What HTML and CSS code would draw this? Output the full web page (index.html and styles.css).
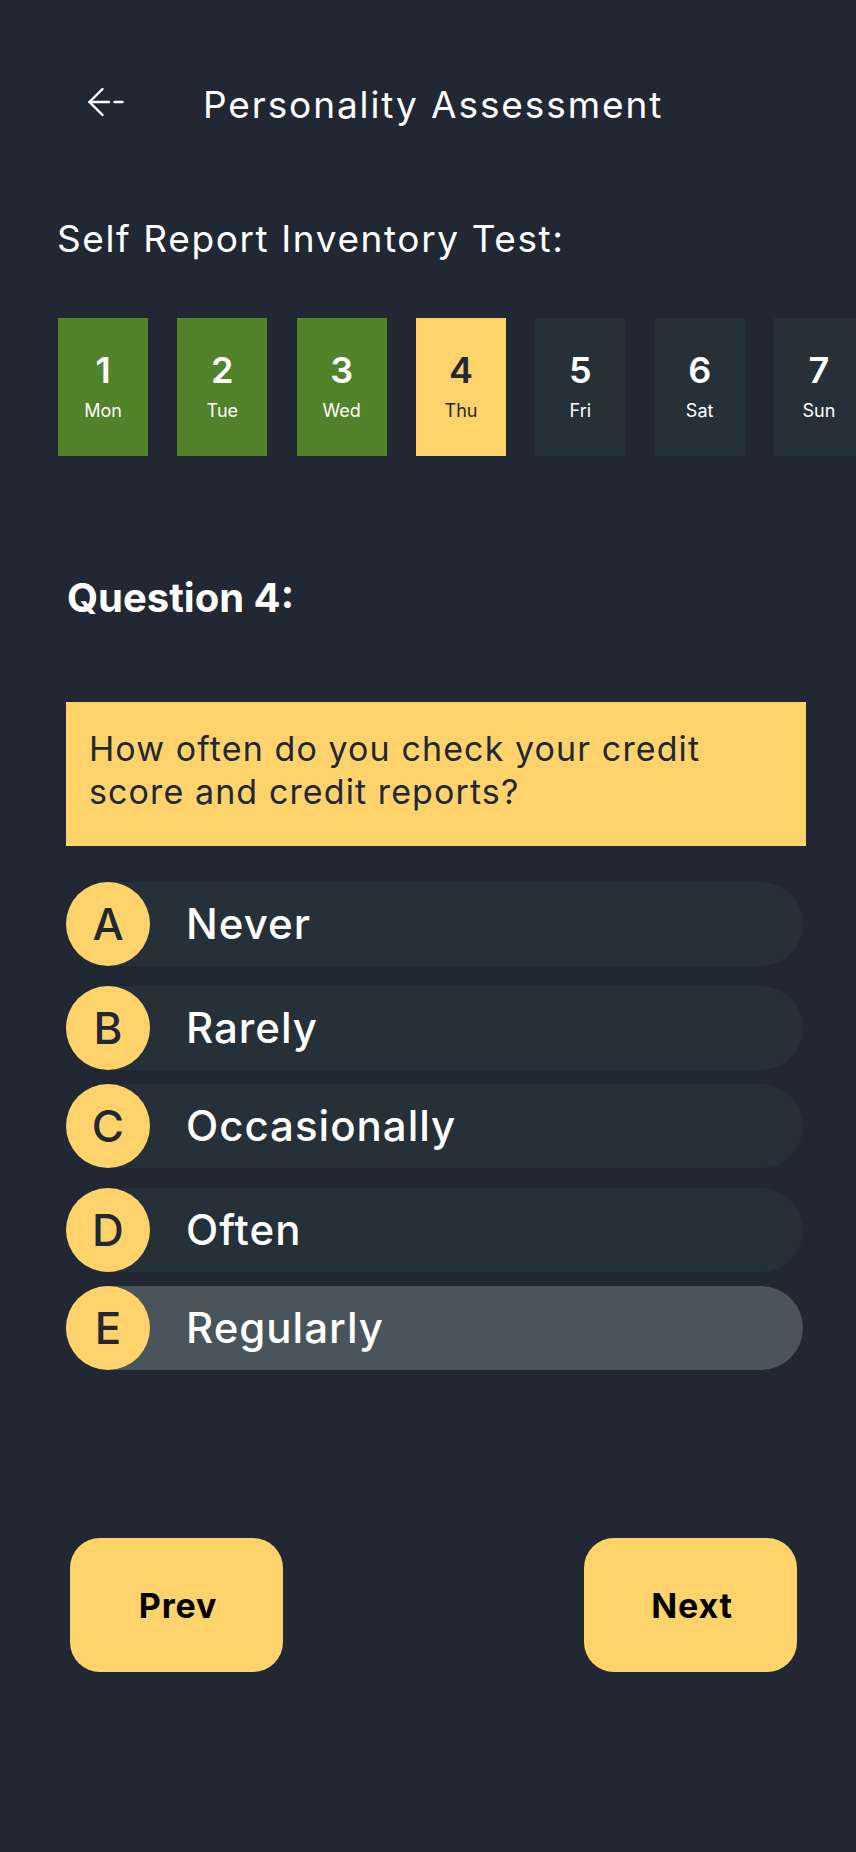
FILE: index.html
```html
<!DOCTYPE html>
<html lang="en">
<head>
<meta charset="utf-8">
<title>Personality Assessment</title>
<link rel="stylesheet" href="styles.css">
</head>
<body>
<div class="screen">
  <header class="header">
    <svg class="back" width="36" height="30" viewBox="0 0 36 30" fill="none" stroke="#ffffff" stroke-width="2.4" stroke-linecap="round" stroke-linejoin="round">
      <path d="M14.5 2 L1.5 15 L14.5 28"/>
      <path d="M1.5 15 H21"/>
      <path d="M26.5 15 H34.5"/>
    </svg>
    <h1 class="title">Personality Assessment</h1>
  </header>

  <h2 class="subtitle">Self Report Inventory Test:</h2>

  <div class="days">
    <div class="day done"><span class="num">1</span><span class="lbl">Mon</span></div>
    <div class="day done"><span class="num">2</span><span class="lbl">Tue</span></div>
    <div class="day done"><span class="num">3</span><span class="lbl">Wed</span></div>
    <div class="day current"><span class="num">4</span><span class="lbl">Thu</span></div>
    <div class="day"><span class="num">5</span><span class="lbl">Fri</span></div>
    <div class="day"><span class="num">6</span><span class="lbl">Sat</span></div>
    <div class="day"><span class="num">7</span><span class="lbl">Sun</span></div>
  </div>

  <h3 class="qlabel">Question 4:</h3>

  <div class="qbox">How often do you check your credit score and credit reports?</div>

  <div class="options">
    <div class="option wide"><span class="letter">A</span><span class="otext">Never</span></div>
    <div class="option"><span class="letter">B</span><span class="otext">Rarely</span></div>
    <div class="option wide"><span class="letter">C</span><span class="otext">Occasionally</span></div>
    <div class="option"><span class="letter">D</span><span class="otext">Often</span></div>
    <div class="option selected"><span class="letter">E</span><span class="otext">Regularly</span></div>
  </div>

  <div class="nav">
    <button class="btn">Prev</button>
    <button class="btn">Next</button>
  </div>
</div>
</body>
</html>
```

FILE: styles.css
```css
* { box-sizing: border-box; }

html, body {
  margin: 0;
  padding: 0;
  background: #222833;
}

body {
  font-family: Inter, "Noto Sans", "Liberation Sans", sans-serif;
  color: #ffffff;
  width: 856px;
  min-height: 1852px;
  overflow: hidden;
}

.screen {
  width: 856px;
  min-height: 1852px;
}

.header {
  display: flex;
  align-items: flex-start;
  padding: 83px 0 0 88px;
}

.back {
  display: block;
  margin-top: 4px;
  flex: none;
}

.title {
  margin: 0 0 0 79px;
  font-size: 37px;
  line-height: 44px;
  font-weight: 400;
  letter-spacing: 1.9px;
}

.subtitle {
  margin: 90px 0 0 57px;
  font-size: 37px;
  line-height: 44px;
  font-weight: 400;
  letter-spacing: 1.6px;
}

.days {
  display: flex;
  gap: 29.33px;
  margin: 57px 0 0 58px;
  overflow: hidden;
  width: 798px;
}

.day {
  flex: none;
  width: 90px;
  height: 138px;
  background: #263038;
  display: flex;
  flex-direction: column;
  align-items: center;
  padding-top: 34px;
}

.day.done { background: #52822a; }
.day.current { background: #ffd36b; color: #222833; }

.num {
  font-size: 36px;
  line-height: 36px;
  font-weight: 600;
}

.lbl {
  margin-top: 11.5px;
  font-size: 18px;
  line-height: 22px;
  font-weight: 400;
}

.qlabel {
  margin: 117.5px 0 0 67px;
  font-size: 40px;
  line-height: 48px;
  font-weight: 700;
}

.qbox {
  margin: 80.5px 50px 0 66px;
  height: 144px;
  background: #ffd36b;
  color: #222833;
  padding: 25px 80px 0 23px;
  font-size: 34px;
  line-height: 43px;
  font-weight: 400;
  letter-spacing: 1.1px;
}

.options {
  margin: 36px 53px 0 66px;
  display: flex;
  flex-direction: column;
  gap: 14px;
}

.option {
  display: flex;
  align-items: center;
  height: 84px;
  border-radius: 42px;
  background: #263038;
}

.option.wide { margin-bottom: 6px; }
.option.selected { background: #4a555b; }

.letter {
  flex: none;
  width: 84px;
  height: 84px;
  border-radius: 50%;
  background: #ffd36b;
  color: #222833;
  display: flex;
  align-items: center;
  justify-content: center;
  font-size: 44px;
  font-weight: 500;
}

.otext {
  margin-left: 36px;
  font-size: 42px;
  line-height: 84px;
  font-weight: 500;
  letter-spacing: 1px;
}

.nav {
  display: flex;
  justify-content: space-between;
  margin-top: 168px;
  padding: 0 59px 0 70px;
}

.btn {
  width: 213px;
  height: 134px;
  border: none;
  border-radius: 30px;
  background: #ffd36b;
  color: #000000;
  font-family: Inter, "Noto Sans", "Liberation Sans", sans-serif;
  font-size: 34px;
  font-weight: 700;
  letter-spacing: 0.8px;
  padding: 0 0 0 3px;
}
```
